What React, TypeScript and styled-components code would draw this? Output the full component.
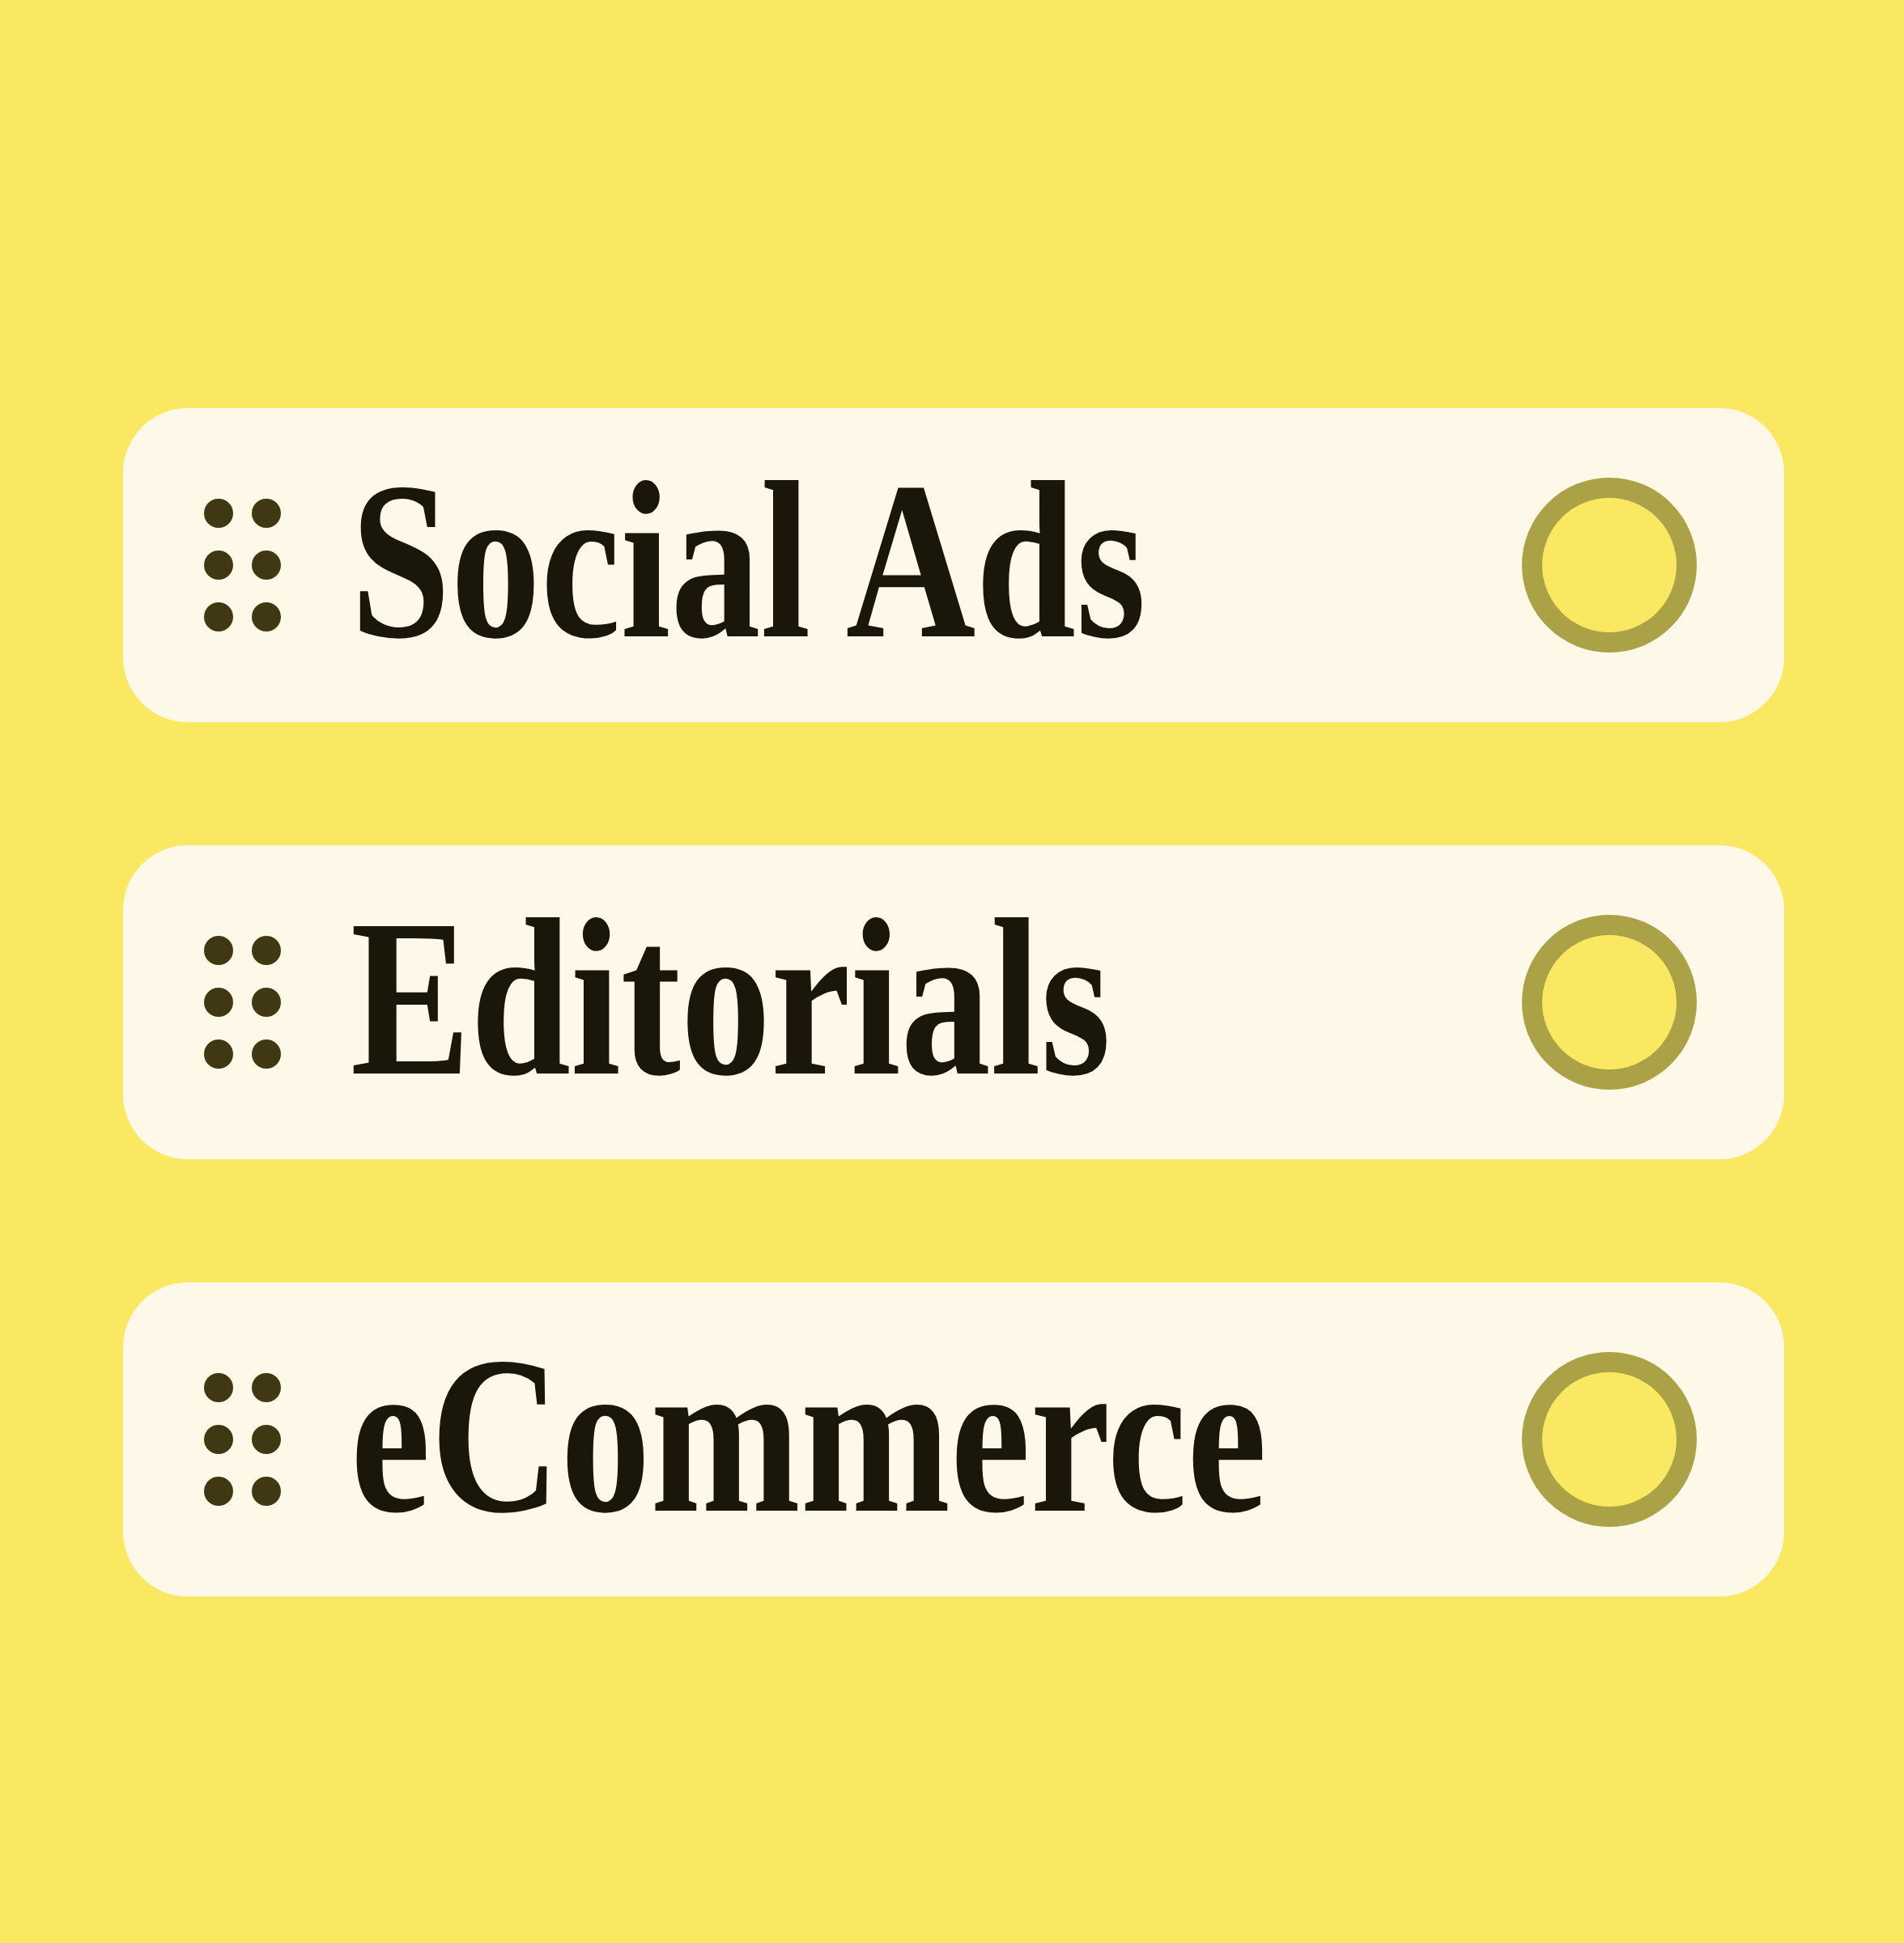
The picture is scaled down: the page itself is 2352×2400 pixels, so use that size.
import React from 'react';
import styled, { createGlobalStyle } from 'styled-components';

const GlobalStyle = createGlobalStyle`
  html, body {
    margin: 0;
    padding: 0;
    background-color: #fbe862;
  }
`;

const Page = styled.div`
  background-color: #fbe862;
  box-sizing: border-box;
  display: flex;
  flex-direction: column;
  gap: 152px;
  min-height: 2400px;
  padding: 504px 148px 0 152px;
  width: 2352px;
`;

const Card = styled.div`
  align-items: center;
  background-color: #fdf8e8;
  border-radius: 80px;
  box-sizing: border-box;
  display: flex;
  height: 388px;
  padding: 0 108px 0 100px;
`;

const Handle = styled.div`
  display: grid;
  flex-shrink: 0;
  gap: 28px 23px;
  grid-template-columns: repeat(2, 36px);
  grid-auto-rows: 36px;
`;

const Dot = styled.span`
  background-color: #3f3812;
  border-radius: 50%;
`;

const Label = styled.div`
  color: #1b160a;
  flex: 1;
  font-family: "Liberation Serif", "Times New Roman", serif;
  font-size: 278px;
  font-weight: 700;
  line-height: 1;
  margin-left: 86px;
  min-width: 0;
  padding-bottom: 12px;
  white-space: nowrap;
`;

// the face in the picture is a condensed display serif
const Squeeze = styled.span`
  display: inline-block;
  transform: scaleX(0.8);
  transform-origin: left center;
`;

const Radio = styled.div`
  background-color: #fbe862;
  border: 25px solid #aba146;
  border-radius: 50%;
  box-sizing: border-box;
  flex-shrink: 0;
  height: 216px;
  width: 216px;
`;

const items = ['Social Ads', 'Editorials', 'eCommerce'];

const App: React.FC = () => {
  return (
    <>
      <GlobalStyle />
      <Page>
        {items.map((item) => (
          <Card key={item}>
            <Handle>
              {Array.from({ length: 6 }).map((_, i) => <Dot key={i} />)}
            </Handle>
            <Label>
              <Squeeze>{item}</Squeeze>
            </Label>
            <Radio />
          </Card>
        ))}
      </Page>
    </>
  );
};

export default App;
